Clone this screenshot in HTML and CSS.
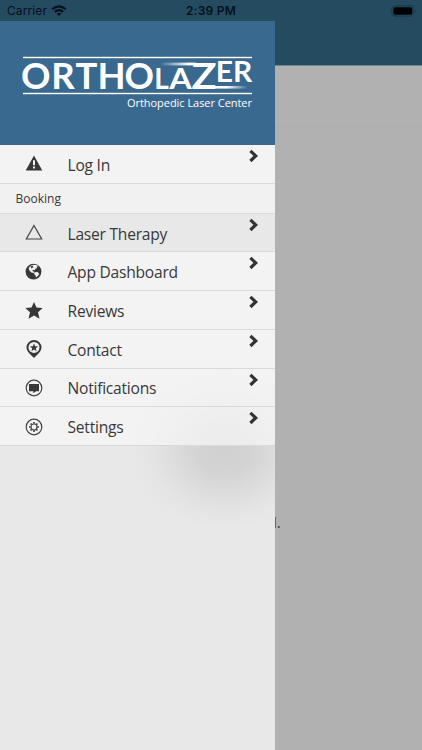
FILE: index.html
```html
<!DOCTYPE html>
<html lang="en">
<head>
<meta charset="utf-8">
<title>OrthoLazer</title>
<link rel="stylesheet" href="styles.css">
</head>
<body>
<svg class="defs" width="0" height="0">
  <symbol id="chevron" viewBox="0 0 10 14"><path d="M1.4 1.8l5.3 5.1-5.3 5.1" fill="none" stroke="#333" stroke-width="3.2"/></symbol>
</svg>
<div class="screen">
  <header class="status">
    <div class="carrier"><span>Carrier</span>
      <svg width="16" height="12" viewBox="0 0 16 12"><g fill="none" stroke="#03101a" stroke-width="2.2"><path d="M1.2 4.3Q8-1.7 14.8 4.3"/><path d="M3.8 7Q8 3.3 12.2 7"/></g><path d="M5.6 8.6Q8 6.7 10.4 8.6L8 11z" fill="#03101a"/></svg>
    </div>
    <div class="time">2:39 PM</div>
    <div class="battery"><svg width="26" height="12" viewBox="0 0 26 12"><rect x=".8" y=".8" width="22" height="10.4" rx="3" fill="none" stroke="#183847"/><rect x="2.3" y="2.3" width="19" height="7.4" rx="1.8" fill="#000"/><path d="M24.2 4.3q1.5 1.7 0 3.4z" fill="#122d3a"/></svg></div>
  </header>
  <div class="body">
    <aside class="drawer">
      <div class="brand">
        <svg width="275" height="124" viewBox="0 21 275 124">
          <defs>
            <linearGradient id="top" x1="0" x2="1"><stop offset="0" stop-color="#fff" stop-opacity="0"/><stop offset=".8" stop-color="#fff"/></linearGradient>
            <linearGradient id="bottom" x1="0" x2="1"><stop offset=".4" stop-color="#fff"/><stop offset="1" stop-color="#fff" stop-opacity="0"/></linearGradient>
          </defs>
          <g class="logo">
            <rect x="23" y="56.8" width="229" height="1.4"/>
            <rect x="23" y="92.8" width="229" height="1.4"/>
            <text class="big" y="88.5" x="21 51.3 75.5 97.5 124.6">ORTHO</text>
            <text class="small" y="88.5" x="154.3">L</text>
            <text class="small" y="88.5" x="169.3" textLength="22.5" lengthAdjust="spacingAndGlyphs">A</text>
            <text class="big" x="191.5" y="88.5" textLength="25" lengthAdjust="spacingAndGlyphs">Z</text>
            <text class="small" x="215.8" y="82.3" textLength="36.5" lengthAdjust="spacingAndGlyphs">ER</text>
            <rect x="160" y="62.6" width="36" height="2.8" fill="url(#top)"/>
            <rect x="212" y="86" width="36" height="2.6" fill="url(#bottom)"/>
            <text class="tagline" x="127" y="107" textLength="125">Orthopedic Laser Center</text>
          </g>
        </svg>
      </div>
      <nav class="menu">
        <a class="item"><svg class="icon" viewBox="0 0 18 18"><path d="M9 .5l8.3 15H.7z"/><path d="M9 5.3v5M9 11.5v2" stroke="#f1f1f1" stroke-width="2"/></svg><span class="label">Log In</span><svg class="chevron"><use href="#chevron"/></svg></a>
        <div class="section">Booking</div>
        <a class="item active"><svg class="icon" viewBox="0 0 18 18"><path class="line" d="M9 1.5L16.7 15H1.3z"/></svg><span class="label">Laser Therapy</span><svg class="chevron"><use href="#chevron"/></svg></a>
        <a class="item"><svg class="icon" viewBox="0 0 18 18"><circle cx="8.5" cy="8.6" r="7.9"/><path fill="#f1f1f1" d="M7 2.1l4.2-.3 2.3 1.4-1.8.3.4 1.5-1.7.8-.7 1.5-1.8-.5-.4 1.3 2 .9-.8 1-2.3-.5L4.6 7.7l-1-2.3L5 3.3zM9.6 9.2l3-.2 1.7 1.9-1.5 2.2-1.7 1.5-.7-2.4-1.4-1.2z"/><path d="M5.4 3.6l2.2-1 .7 1.3-1.8 1.5z"/></svg><span class="label">App Dashboard</span><svg class="chevron"><use href="#chevron"/></svg></a>
        <a class="item"><svg class="icon" viewBox="0 0 18 18"><path d="M9 0l2.5 5.4 6.2.7-4.7 4.2 1.5 6.5L9 13.4l-5.5 3.4L5 10.3.3 6.1l6.2-.7z"/></svg><span class="label">Reviews</span><svg class="chevron"><use href="#chevron"/></svg></a>
        <a class="item"><svg class="icon" viewBox="0 0 18 18"><path d="M9 0a7.5 7.3 0 0 0-7.5 7.3C1.5 11.7 5.8 14.5 9 18c3.2-3.5 7.5-6.3 7.5-10.7A7.5 7.3 0 0 0 9 0z"/><circle cx="9" cy="7.4" r="5.5" fill="#f1f1f1"/><path d="M9 3.4l1.1 2.8 3 .2-2.3 1.9.7 2.9L9 9.6l-2.5 1.6.7-2.9-2.3-1.9 3-.2z"/></svg><span class="label">Contact</span><svg class="chevron"><use href="#chevron"/></svg></a>
        <a class="item"><svg class="icon" viewBox="0 0 18 18"><circle class="line" cx="9" cy="9" r="7.8"/><path d="M4 5h10v7.2h-3l-2.7 2v-2H4z"/></svg><span class="label">Notifications</span><svg class="chevron"><use href="#chevron"/></svg></a>
        <a class="item"><svg class="icon" viewBox="0 0 18 18"><circle class="line" cx="9" cy="9" r="7.8"/><circle class="line" cx="9" cy="9" r="3"/><path class="teeth" d="M9 4v1.8M9 12.2V14M4 9h1.8M12.2 9H14M5.5 5.5l1.2 1.2M11.3 11.3l1.2 1.2M5.5 12.5l1.2-1.2M11.3 6.7l1.2-1.2"/></svg><span class="label">Settings</span><svg class="chevron"><use href="#chevron"/></svg></a>
      </nav>
    </aside>
    <main class="page">
      <div class="toolbar"></div>
      <div class="panel"></div>
      <p class="message">l.</p>
    </main>
  </div>
</div>
</body>
</html>
```
FILE: styles.css
```css
* { box-sizing: border-box; }
body { margin: 0; font-family: "Open Sans", "Noto Sans", sans-serif; color: #383838; }
.defs { display: block; }
.screen { width: 422px; height: 750px; overflow: hidden; display: flex; flex-direction: column; background: #b1b1b1; }
.status { flex: none; height: 21px; background: #254b61; display: grid; grid-template-columns: 1fr auto 1fr; align-items: center; padding: 0 5px 0 7px; font: 12px/21px Inter, sans-serif; color: #03101a; }
.carrier { display: flex; align-items: center; gap: 4px; letter-spacing: .1px; }
.time { font-weight: 600; letter-spacing: .25px; margin-left: -2px; }
.battery { display: flex; justify-content: flex-end; }
.body { flex: 1; display: flex; min-height: 0; }
.drawer { width: 275px; flex: none; background: radial-gradient(ellipse 95px 80px at 225px 430px, #d0d0d0 0%, #d4d4d4 30%, #dedede 58%, #e5e5e5 80%, #e8e8e8 100%); }
.brand { height: 124px; background: #3a698f; }
.brand svg { display: block; }
.logo { fill: #fff; }
.big { font: 700 36.5px Lato, sans-serif; }
.small { font: 700 28px Lato, sans-serif; }
.tagline { font-size: 11px; }
.item { height: 38.72px; display: flex; align-items: center; padding: 0 16px 0 25px; background: rgba(246,246,246,.72); border-bottom: 1px solid #d9d9d9; }
.item.active { background: #e8e8e8; }
.section { height: 30px; padding-left: 15.5px; font-size: 12px; line-height: 30px; background: #f1f1f1; border-bottom: 1px solid #dcdcdc; }
.icon { width: 18px; height: 18px; flex: none; fill: #383838; margin-top: 1px; }
.line { fill: none; stroke: #454545; stroke-width: 1.2; }
.teeth { fill: none; stroke: #454545; stroke-width: 1.7; }
.label { flex: 1; margin-left: 24.5px; font-size: 15.6px; letter-spacing: -.24px; line-height: 22px; padding-top: 2px; }
.chevron { width: 10px; height: 14px; align-self: flex-start; margin-top: 4px; }
.page { flex: 1; overflow: hidden; }
.toolbar { height: 45px; background: #254b61; border-bottom: 1px solid #70858f; }
.panel { height: 61px; border-bottom: 1px solid #adadb1; }
.message { margin: 385px 0 0 -2px; font-size: 15px; line-height: 20px; color: #333; }
```
